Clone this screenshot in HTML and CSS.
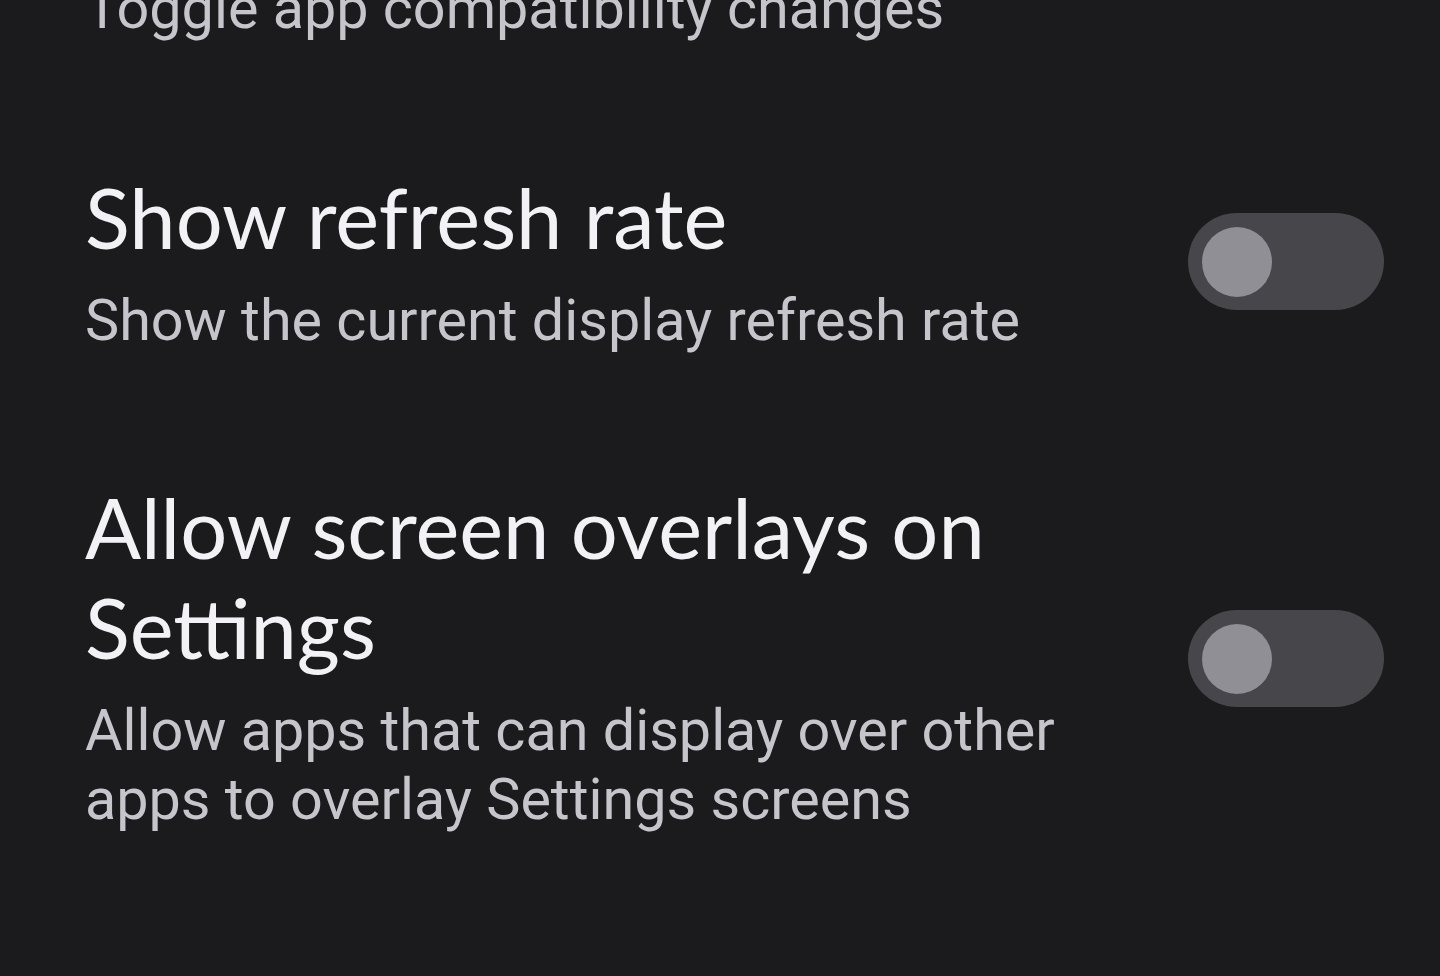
FILE: index.html
```html
<!DOCTYPE html>
<html lang="en">
<head>
    <meta charset="UTF-8">
    <title>Developer options</title>
    <link rel="stylesheet" href="styles.css">
</head>
<body>
<div class="settings-list">
    <div class="pref-item pref-cut">
        <div class="pref-text">
            <div class="pref-summary">Toggle app compatibility changes</div>
        </div>
    </div>

    <div class="pref-item pref-refresh">
        <div class="pref-text">
            <div class="pref-title">Show refresh rate</div>
            <div class="pref-summary">Show the current display refresh rate</div>
        </div>
        <div class="switch"><div class="thumb"></div></div>
    </div>

    <div class="pref-item pref-overlay">
        <div class="pref-text">
            <div class="pref-title">Allow screen overlays on Settings</div>
            <div class="pref-summary">Allow apps that can display over other apps to overlay Settings screens</div>
        </div>
        <div class="switch"><div class="thumb"></div></div>
    </div>
</div>
</body>
</html>
```

FILE: styles.css
```css
* {
    box-sizing: border-box;
}
html, body {
    height: 100%;
}
body {
    margin: 0;
    background-color: #1b1b1d;
    font-family: Roboto, sans-serif;
    overflow: hidden;
}
.settings-list {
    padding: 0 56px 0 85px;
}
.pref-item {
    display: flex;
    align-items: center;
    justify-content: space-between;
}
.pref-text {
    flex: 1;
    max-width: 1040px;
}
.pref-title {
    font-family: Lato, sans-serif;
    font-size: 83px;
    line-height: 100px;
    color: #f2f1f6;
    margin-bottom: 19px;
}
.pref-summary {
    font-size: 57.5px;
    line-height: 69px;
    color: #c6c5cc;
}
.pref-cut {
    margin-top: -26px;
}
.pref-refresh {
    margin-top: 124px;
}
.pref-overlay {
    margin-top: 122px;
}
.switch {
    width: 196px;
    height: 97px;
    border-radius: 49px;
    background-color: #47464b;
    padding: 14px;
    flex-shrink: 0;
}
.pref-overlay .switch {
    margin-top: 6px;
}
.thumb {
    width: 70px;
    height: 70px;
    border-radius: 50%;
    background-color: #918f96;
}
```
